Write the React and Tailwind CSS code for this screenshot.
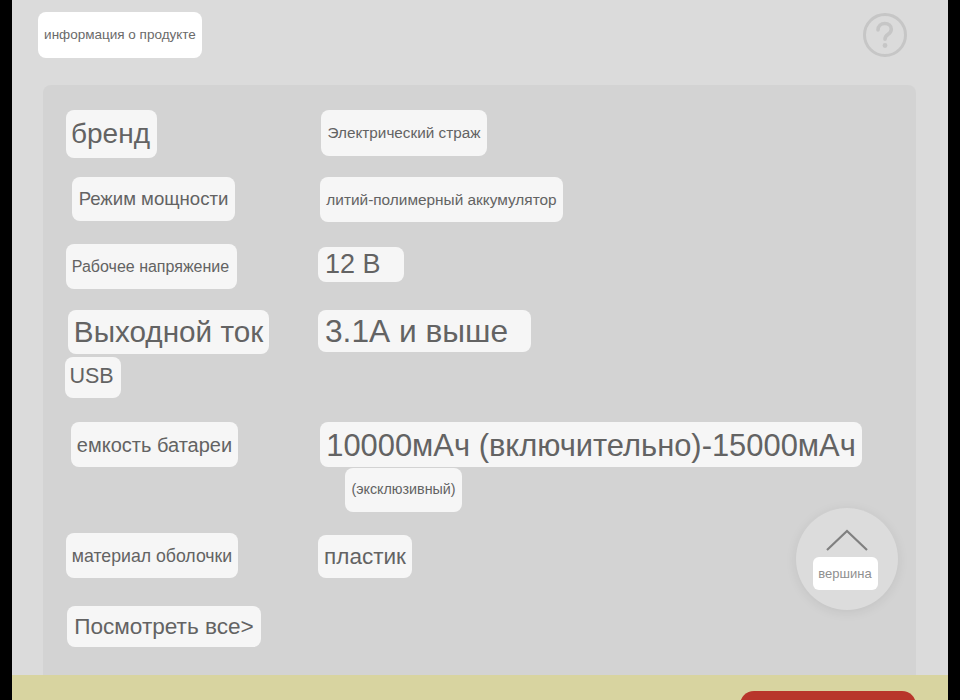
import React from 'react';

function Pill({ className = '', children }) {
  return (
    <div className={`flex items-center justify-center whitespace-nowrap rounded-[8px] bg-[#f6f6f6] text-[#636363] ${className}`}>
      {children}
    </div>
  );
}

export default function App() {
  return (
    <div className="relative flex h-[700px] w-[960px] overflow-hidden bg-black font-['Liberation_Sans',Arial,sans-serif]">
      <div className="ml-[12px] flex h-full w-[936px] flex-col bg-[#dbdbdb]">
        {/* Header */}
        <header className="flex h-[85px] shrink-0 items-start justify-between pl-[26px] pr-[41px]">
          <div className="mt-[12px] flex h-[46px] w-[164px] items-center justify-center whitespace-nowrap rounded-[8px] bg-white text-[13.5px] text-[#6a6a6a]">
            информация о продукте
          </div>
          <svg className="mt-[13px]" width="44" height="44" viewBox="0 0 44 44" fill="none">
            <circle cx="22" cy="22" r="20.5" stroke="#c6c6c6" strokeWidth="3" />
            <path d="M15 17c0-4 3-6.500 6.800-6.500 3.800 0 6.500 2.400 6.500 5.700 0 2.600-1.500 3.900-3.400 5.300-1.800 1.300-2.900 2.300-2.900 4.800" stroke="#c6c6c6" strokeWidth="3.600" strokeLinecap="round" />
            <circle cx="22" cy="32.500" r="2.400" fill="#c6c6c6" />
          </svg>
        </header>

        {/* Spec panel */}
        <section className="ml-[31px] flex h-[590px] w-[873px] shrink-0 flex-col rounded-t-[8px] bg-[#d3d3d3] pl-[22px] pt-[25px]">
          <div className="flex h-[48px] items-start">
            <Pill className="ml-[1px] h-[48px] w-[91px] pr-[2px] text-[28px]">бренд</Pill>
            <Pill className="ml-[164px] h-[46px] w-[166px] text-[15.3px]">Электрический страж</Pill>
          </div>
          <div className="mt-[19px] flex h-[45px] items-start">
            <Pill className="ml-[7px] h-[44px] w-[163px] text-[18.6px]">Режим мощности</Pill>
            <Pill className="ml-[85px] h-[45px] w-[243px] text-[15.4px]">литий-полимерный аккумулятор</Pill>
          </div>
          <div className="mt-[22px] flex h-[45px] items-start">
            <Pill className="ml-[1px] h-[45px] w-[171px] pr-[2px] text-[16px]">Рабочее напряжение</Pill>
            <Pill className="ml-[81px] mt-[3px] h-[35px] w-[86px] justify-start pl-[7px] text-[27px] text-[#4a4a4a]">12 В</Pill>
          </div>
          <div className="mt-[21px] flex h-[44px] items-start">
            <Pill className="ml-[3px] h-[44px] w-[201px] text-[29.7px]">Выходной ток</Pill>
            <Pill className="ml-[49px] h-[42px] w-[213px] justify-start pl-[7px] pt-[1px] text-[31.7px] text-[#4a4a4a]">3.1А и выше</Pill>
          </div>
          <Pill className="mt-[3px] h-[41px] w-[56px] pb-[2px] pr-[3px] text-[21.5px]">USB</Pill>
          <div className="mt-[24px] flex h-[45px] items-start">
            <Pill className="ml-[6px] h-[45px] w-[167px] text-[20px]">емкость батареи</Pill>
            <Pill className="ml-[82px] h-[45px] w-[542px] pt-[3px] text-[30.9px] text-[#4a4a4a]">10000мАч (включительно)-15000мАч</Pill>
          </div>
          <Pill className="ml-[280px] mt-[1px] h-[44px] w-[117px] text-[14.3px]">(эксклюзивный)</Pill>
          <div className="mt-[21px] flex h-[45px] items-start">
            <Pill className="ml-[1px] h-[45px] w-[172px] pt-[1px] text-[17.7px]">материал оболочки</Pill>
            <Pill className="ml-[80px] mt-[2px] h-[43px] w-[94px] text-[22.5px]">пластик</Pill>
          </div>
          <Pill className="ml-[2px] mt-[28px] h-[41px] w-[194px] text-[22.6px]">Посмотреть все&gt;</Pill>
        </section>

        {/* Bottom bar */}
        <footer className="flex h-[25px] shrink-0 items-start justify-end bg-[#d8d4a0] pr-[32px] pt-[16px]">
          <div className="h-[20px] w-[176px] rounded-t-[14px] bg-[#b8362b]" />
        </footer>
      </div>

      {/* Back to top */}
      <div className="absolute left-[796px] top-[508px] flex h-[102px] w-[102px] flex-col items-center rounded-full bg-[#dcdcdc] shadow-[0_2px_12px_rgba(0,0,0,0.08)]">
        <svg className="mt-[20px]" width="44" height="24" viewBox="0 0 44 24" fill="none">
          <path d="M2 22 L22 3 L42 22" stroke="#808080" strokeWidth="2.200" />
        </svg>
        <div className="mr-[4px] mt-[5px] flex h-[33px] w-[65px] items-center justify-center rounded-[6px] bg-white text-[13px] text-[#8f8f8f]">
          вершина
        </div>
      </div>
    </div>
  );
}
